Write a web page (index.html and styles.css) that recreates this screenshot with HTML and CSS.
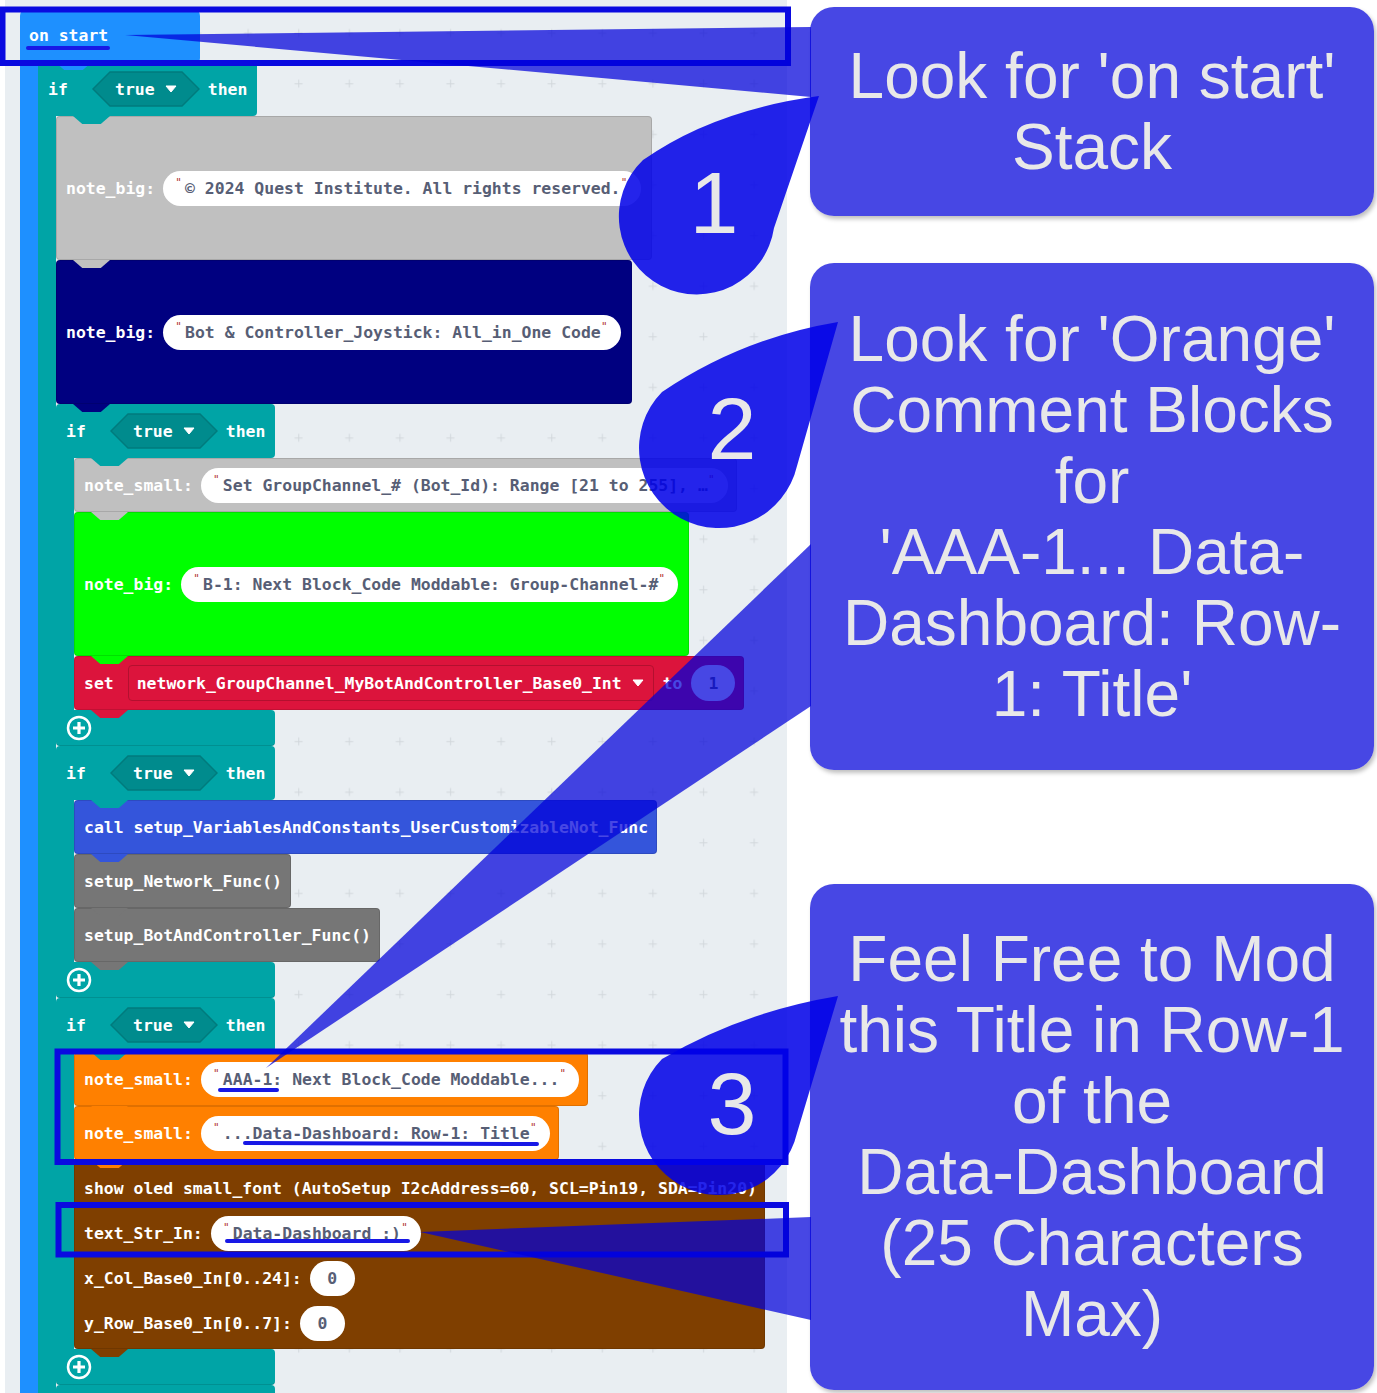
FILE: index.html
```html
<!DOCTYPE html>
<html>
<head>
<meta charset="utf-8">
<link rel="stylesheet" href="styles.css">
</head>
<body>
<div class="ws">
  <svg class="grid" width="782" height="1393">
    <defs>
      <pattern id="gp" x="15.3" y="7.7" width="50.6" height="50.6" patternUnits="userSpaceOnUse">
        <path d="M21.3 25.5h8M25.5 21.3v8" stroke="#d2d7dc" stroke-width="1"/>
      </pattern>
    </defs>
    <rect width="782" height="1393" fill="url(#gp)"/>
  </svg>
  <div class="stack">
    <div class="c hat">
      <div class="c-head hat-head">on start</div>
      <div class="c-body">
        <div class="c logic">
          <div class="c-head">if<span class="hex"><svg class="hex-bg" width="108" height="36"><polygon points="1,18 18,1 90,1 107,18 90,35 18,35" fill="#008b8d" stroke="#007b7d" stroke-width="1.5"/></svg><span class="hex-t">true</span><svg class="arrow" width="12" height="8"><polygon points="1,1 11,1 6,7" fill="#fff" stroke="#fff" stroke-linejoin="round"/></svg></span><span class="then">then</span></div>
          <div class="c-body">
            <div class="stmt big silver"><span class="lbl">note_big:</span><span class="str"><span class="qm">"</span>© 2024 Quest Institute. All rights reserved.<span class="qm">"</span></span></div>
            <div class="stmt big navy"><span class="lbl">note_big:</span><span class="str"><span class="qm">"</span>Bot &amp; Controller_Joystick: All_in_One Code<span class="qm">"</span></span></div>

            <div class="c logic">
              <div class="c-head">if<span class="hex"><svg class="hex-bg" width="108" height="36"><polygon points="1,18 18,1 90,1 107,18 90,35 18,35" fill="#008b8d" stroke="#007b7d" stroke-width="1.5"/></svg><span class="hex-t">true</span><svg class="arrow" width="12" height="8"><polygon points="1,1 11,1 6,7" fill="#fff" stroke="#fff" stroke-linejoin="round"/></svg></span><span class="then">then</span></div>
              <div class="c-body">
                <div class="stmt silver"><span class="lbl">note_small:</span><span class="str"><span class="qm">"</span>Set GroupChannel_# (Bot_Id): Range [21 to 255], …<span class="qm">"</span></span></div>
                <div class="stmt big lime"><span class="lbl">note_big:</span><span class="str"><span class="qm">"</span>B-1: Next Block_Code Moddable: Group-Channel-#<span class="qm">"</span></span></div>
                <div class="stmt crimson"><span class="lbl set-l">set</span><span class="var">network_GroupChannel_MyBotAndController_Base0_Int<svg class="arrow" width="12" height="8"><polygon points="1,1 11,1 6,7" fill="#fff" stroke="#fff" stroke-linejoin="round"/></svg></span><span class="to">to</span><span class="num n44">1</span></div>
              </div>
              <div class="c-foot"><svg class="plus" width="26" height="26"><circle cx="13" cy="13" r="11" fill="none" stroke="#fff" stroke-width="2.5"/><path d="M13 7v12M7 13h12" stroke="#fff" stroke-width="3.2"/></svg></div>
            </div>

            <div class="c logic">
              <div class="c-head">if<span class="hex"><svg class="hex-bg" width="108" height="36"><polygon points="1,18 18,1 90,1 107,18 90,35 18,35" fill="#008b8d" stroke="#007b7d" stroke-width="1.5"/></svg><span class="hex-t">true</span><svg class="arrow" width="12" height="8"><polygon points="1,1 11,1 6,7" fill="#fff" stroke="#fff" stroke-linejoin="round"/></svg></span><span class="then">then</span></div>
              <div class="c-body">
                <div class="stmt fn-call">call setup_VariablesAndConstants_UserCustomizableNot_Func</div>
                <div class="stmt fn-gray">setup_Network_Func()</div>
                <div class="stmt fn-gray">setup_BotAndController_Func()</div>
              </div>
              <div class="c-foot"><svg class="plus" width="26" height="26"><circle cx="13" cy="13" r="11" fill="none" stroke="#fff" stroke-width="2.5"/><path d="M13 7v12M7 13h12" stroke="#fff" stroke-width="3.2"/></svg></div>
            </div>

            <div class="c logic">
              <div class="c-head">if<span class="hex"><svg class="hex-bg" width="108" height="36"><polygon points="1,18 18,1 90,1 107,18 90,35 18,35" fill="#008b8d" stroke="#007b7d" stroke-width="1.5"/></svg><span class="hex-t">true</span><svg class="arrow" width="12" height="8"><polygon points="1,1 11,1 6,7" fill="#fff" stroke="#fff" stroke-linejoin="round"/></svg></span><span class="then">then</span></div>
              <div class="c-body">
                <div class="stmt orange"><span class="lbl">note_small:</span><span class="str"><span class="qm">"</span>AAA-1: Next Block_Code Moddable...<span class="qm">"</span></span></div>
                <div class="stmt orange"><span class="lbl">note_small:</span><span class="str"><span class="qm">"</span>...Data-Dashboard: Row-1: Title<span class="qm">"</span></span></div>
                <div class="stmt brown oled">
                  <div class="row">show oled small_font (AutoSetup I2cAddress=60, SCL=Pin19, SDA=Pin20)</div>
                  <div class="row"><span class="lbl">text_Str_In:</span><span class="str"><span class="qm">"</span>Data-Dashboard :)<span class="qm">"</span></span></div>
                  <div class="row"><span class="lbl">x_Col_Base0_In[0..24]:</span><span class="num">0</span></div>
                  <div class="row"><span class="lbl">y_Row_Base0_In[0..7]:</span><span class="num">0</span></div>
                </div>
              </div>
              <div class="c-foot"><svg class="plus" width="26" height="26"><circle cx="13" cy="13" r="11" fill="none" stroke="#fff" stroke-width="2.5"/><path d="M13 7v12M7 13h12" stroke="#fff" stroke-width="3.2"/></svg></div>
            </div>

            <div class="c logic">
              <div class="c-head"></div>
            </div>
          </div>
        </div>
      </div>
    </div>
  </div>
</div>

<div class="side">
  <div class="callout co1">Look for 'on start'<br>Stack</div>
  <div class="callout co2">Look for 'Orange'<br>Comment Blocks<br>for<br>'AAA-1... Data-<br>Dashboard: Row-<br>1: Title'</div>
  <div class="callout co3">Feel Free to Mod<br>this Title in Row-1<br>of the<br>Data-Dashboard<br>(25 Characters<br>Max)</div>
</div>

<svg class="overlay" width="1377" height="1393" viewBox="0 0 1377 1393">
  <g fill="none" stroke="#0a0ae0" stroke-width="6">
    <rect x="2.5" y="9.5" width="785.5" height="53.5"/>
    <rect x="57.5" y="1051.5" width="728" height="110.5"/>
    <rect x="58.5" y="1205" width="727.5" height="49.5"/>
  </g>
  <g fill="rgba(0,0,218,0.72)">
    <polygon points="125,35 811,27 811,97"/>
    <polygon points="266,1068 811,544 811,706"/>
    <polygon points="420,1232 811,1217 811,1320"/>
  </g>
  <g fill="rgba(0,0,232,0.86)">
    <path d="M819 96 Q714 110 643 160 A78 78 0 1 0 774 228 Z"/>
    <path d="M838 322 Q742 338 662 392 A80 80 0 1 0 797 466 Z"/>
    <path d="M838 996 Q742 1012 662 1059 A80 80 0 1 0 797 1133 Z"/>
  </g>
  <g stroke="#1818e6" stroke-width="4" stroke-linecap="round">
    <line x1="28" y1="48" x2="108" y2="48"/>
    <line x1="220" y1="1090" x2="277" y2="1090"/>
    <line x1="245" y1="1143" x2="537" y2="1144"/>
    <line x1="227" y1="1241" x2="408" y2="1241"/>
  </g>
  <g class="nums" fill="#e8e8e8" text-anchor="middle">
    <text x="714" y="233">1</text>
    <text x="732" y="459">2</text>
    <text x="732" y="1134">3</text>
  </g>
</svg>
</body>
</html>
```

FILE: styles.css
```css
* { box-sizing: border-box; }

html, body {
  margin: 0;
  padding: 0;
}

body {
  position: relative;
  width: 1377px;
  height: 1393px;
  overflow: hidden;
  background: #fff;
  display: flex;
  align-items: flex-start;
}

/* ---------- workspace ---------- */
.ws {
  position: relative;
  width: 782px;
  height: 1393px;
  margin-left: 5px;
  background: #e9eef2;
  overflow: hidden;
  flex: none;
}

.grid {
  position: absolute;
  left: 0;
  top: 0;
}

.stack {
  position: relative;
  padding: 8px 0 0 15px;
  display: flex;
  flex-direction: column;
  align-items: flex-start;
  font-family: "DejaVu Sans Mono", monospace;
  font-weight: bold;
  font-size: 16.45px;
  color: #fff;
  white-space: nowrap;
}

/* ---------- C blocks ---------- */
.c {
  display: flex;
  flex-direction: column;
  align-items: flex-start;
}

.hat { --bc: #1e90ff; }
.logic { --bc: #00a4a6; }

.c-head {
  position: relative;
  display: flex;
  align-items: center;
  width: 219px;
  height: 54px;
  padding-left: 10px;
  background: var(--bc);
  border-radius: 4px 4px 4px 0;
}

.hat-head {
  width: 180px;
  padding-left: 9px;
  border-radius: 8px 8px 4px 0;
}

.c-head::after,
.stmt::after,
.c-foot::after {
  content: "";
  position: absolute;
  top: 100%;
  left: 17px;
  width: 37px;
  height: 8px;
  background: inherit;
  clip-path: polygon(0 0, 100% 0, 75% 100%, 25% 100%);
  z-index: 2;
}

.c-head::after { left: 35px; }

.c-body {
  display: flex;
  flex-direction: column;
  align-items: flex-start;
  border-left: 18px solid var(--bc);
}

.c-foot {
  position: relative;
  width: 219px;
  height: 36px;
  background: var(--bc);
  border-radius: 0 4px 4px 4px;
  display: flex;
  align-items: center;
  padding-left: 10px;
  box-shadow: inset 0 -1px 0 rgba(0, 0, 0, 0.12);
}

.plus { display: block; }

/* hexagon boolean */
.hex {
  position: relative;
  width: 108px;
  height: 36px;
  margin-left: 24px;
  display: flex;
  align-items: center;
  justify-content: center;
  gap: 10px;
}

.hex-bg {
  position: absolute;
  left: 0;
  top: 0;
}

.hex-t { position: relative; }

.arrow {
  position: relative;
  display: block;
  flex: none;
}

.then { margin-left: 8px; }

/* ---------- statement blocks ---------- */
.stmt {
  position: relative;
  display: flex;
  align-items: center;
  height: 54px;
  padding: 0 9px 0 10px;
  border-radius: 4px;
  box-shadow: inset 0 0 0 1px rgba(0, 0, 0, 0.12);
}

.big { height: 144px; padding-right: 11px; }

.silver { background-color: #c0c0c0; }
.navy { background-color: #000080; }
.lime { background-color: #00ff00; }
.crimson { background-color: #dc143c; }
.fn-call { background-color: #3455db; }
.fn-gray { background-color: #767676; }
.orange { background-color: #ff8000; }
.brown { background-color: #7f3f00; }

.lbl { margin-right: 8px; }
.set-l { margin-right: 14px; }

.str {
  display: inline-flex;
  align-items: center;
  height: 35px;
  padding: 0 10px 0 12px;
  background: #fff;
  border-radius: 17.5px;
  color: #575e75;
}

.qm {
  align-self: flex-start;
  width: 8px;
  margin: 6px 1px 0;
  font-family: "DejaVu Sans", sans-serif;
  font-weight: normal;
  font-size: 11px;
  line-height: 1;
  color: #b03030;
}

.var {
  display: flex;
  align-items: center;
  gap: 10px;
  height: 36px;
  padding: 0 9px 0 8px;
  border: 1px solid #b3102f;
  border-radius: 4px;
}

.to { margin-left: 9px; margin-right: 9px; }

.num {
  display: flex;
  align-items: center;
  justify-content: center;
  width: 45px;
  height: 35px;
  border-radius: 17.5px;
  background: #fff;
  color: #575e75;
}

.n44 { width: 44px; height: 36px; border-radius: 18px; }

.oled {
  height: auto;
  flex-direction: column;
  align-items: flex-start;
  padding: 6px 8px 3px 10px;
}

.row {
  height: 45px;
  display: flex;
  align-items: center;
}

/* ---------- callouts ---------- */
.side {
  width: 564px;
  margin-left: 23px;
  display: flex;
  flex-direction: column;
  flex: none;
}

.callout {
  display: flex;
  align-items: center;
  justify-content: center;
  text-align: center;
  background: rgba(0, 0, 218, 0.72);
  border-radius: 24px;
  box-shadow: 2px 3px 4px rgba(0, 0, 0, 0.25);
  color: #e8e8e8;
  font-family: "Liberation Sans", Arial, sans-serif;
  font-size: 64px;
  line-height: 71px;
  white-space: nowrap;
}

.co1 { margin-top: 7px; height: 209px; }
.co2 { margin-top: 47px; height: 507px; }
.co3 { margin-top: 114px; height: 506px; }

/* ---------- annotation overlay ---------- */
.overlay {
  position: absolute;
  left: 0;
  top: 0;
  z-index: 10;
  pointer-events: none;
}

.nums text {
  font-family: "Liberation Sans", Arial, sans-serif;
  font-size: 88px;
}
```
